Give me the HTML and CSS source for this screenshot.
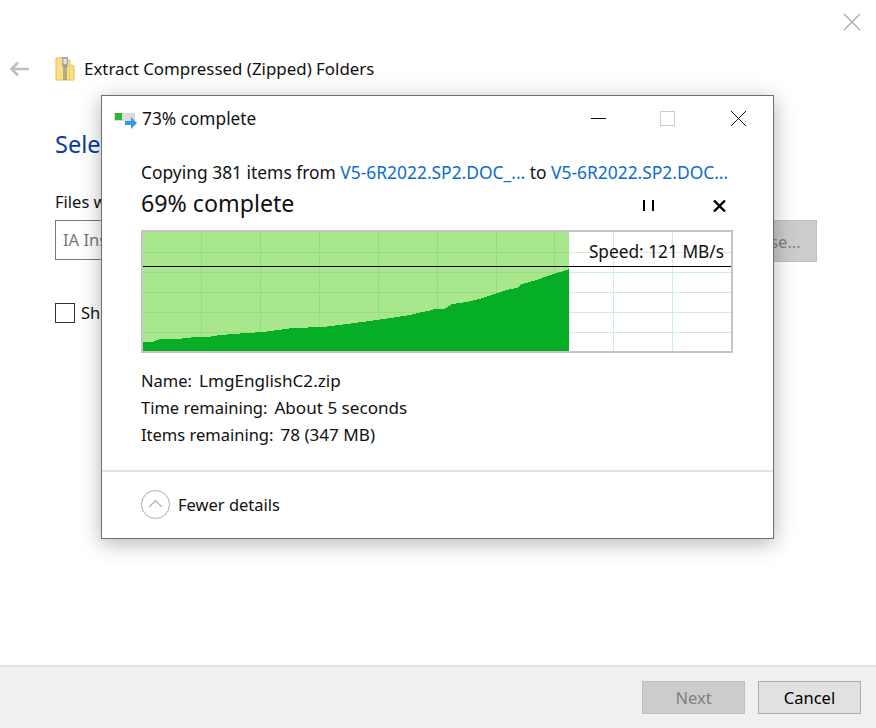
FILE: index.html
```html
<!DOCTYPE html>
<html lang="en">
<head>
<meta charset="utf-8">
<title>Extract Compressed (Zipped) Folders</title>
<link rel="stylesheet" href="styles.css">
</head>
<body>
<div class="wizard">
  <div class="wizard-top">
    <svg class="icon-close-wizard" width="18" height="18" viewBox="0 0 18 18"><path d="M1 1L17 17M17 1L1 17" stroke="#a8a8a8" stroke-width="1.1" fill="none"/></svg>
  </div>
  <div class="wizard-head">
    <svg class="icon-back" width="22" height="16" viewBox="0 0 22 16"><path d="M9 1.5L2.5 8L9 14.500M3 8H20" stroke="#c0c0c0" stroke-width="2.600" fill="none"/></svg>
    <svg class="icon-zip" width="20" height="24" viewBox="0 0 20 24">
      <path d="M1 1H6V0.500H11V3H15V8L19 9V23H1Z" fill="#fbe08a" stroke="#e8c04e"/>
      <rect x="14" y="4" width="1" height="19" fill="#f0cd62"/>
      <rect x="7" y="0" width="6" height="10" rx="1" fill="#a9a9a9"/>
      <rect x="8.500" y="2" width="3" height="5" fill="#e4e4e4"/>
      <path d="M8 10H12M8 12H12M8 14H12M8 16H12M8 18H12M8 20H12M8 22H12" stroke="#777" stroke-width="1"/>
    </svg>
    <span class="wizard-title">Extract Compressed (Zipped) Folders</span>
  </div>
  <main class="wizard-body">
    <h1 class="wizard-heading">Select a Destination and Extract Files</h1>
    <label class="field-label">Files will be extracted to this folder:</label>
    <div class="field-row">
      <div class="field-input">IA Installers\V5-6R2022.SP2.DOC</div>
      <div class="btn btn-disabled btn-browse">Browse...</div>
    </div>
    <div class="check-row"><span class="checkbox"></span><span>Show extracted files when complete</span></div>
  </main>
  <footer class="wizard-foot">
    <div class="btn btn-disabled">Next</div>
    <div class="btn btn-normal">Cancel</div>
  </footer>
</div>

<section class="dialog">
  <div class="dlg-title">
    <svg class="icon-copy" width="24" height="18" viewBox="0 0 24 18">
      <rect x="0" y="1" width="21" height="8" fill="#dcdcdc"/>
      <rect x="1" y="1" width="7" height="7" fill="#2fb334"/>
      <path d="M11 9H17V5L23 11L17 17V13H11Z" fill="#3b97e3"/>
    </svg>
    <span class="dlg-title-text">73% complete</span>
    <div class="win-controls">
      <svg width="15" height="16" viewBox="0 0 15 16"><path d="M0 8.500H15" stroke="#111" stroke-width="1"/></svg>
      <svg width="15" height="16" viewBox="0 0 15 16"><rect x="0.500" y="1.500" width="14" height="14" fill="none" stroke="#ccc"/></svg>
      <svg class="win-x" width="15" height="16" viewBox="0 0 15 16"><path d="M0 1L15 16M15 1L0 16" stroke="#111" stroke-width="1" fill="none"/></svg>
    </div>
  </div>
  <div class="dlg-content">
    <p class="copy-line">Copying 381 items from <a class="link">V5-6R2022.SP2.DOC_...</a> to <a class="link">V5-6R2022.SP2.DOC...</a></p>
    <div class="progress-row">
      <span class="progress-text">69% complete</span>
      <div class="progress-actions">
        <svg width="12" height="12" viewBox="0 0 12 12"><path d="M1 0V11M10 0V11" stroke="#000" stroke-width="2" fill="none"/></svg>
        <svg width="13" height="12" viewBox="0 0 13 12"><path d="M1 0.500L12 11.500M12 0.500L1 11.500" stroke="#000" stroke-width="2.400" fill="none"/></svg>
      </div>
    </div>
    <div class="chart">
      <svg class="chart-svg" width="588" height="119" viewBox="143 232 588 119" shape-rendering="crispEdges">
        <rect x="143" y="232" width="426" height="119" fill="#a9e78f"/>
        <path d="M143 252.500H569M143 272.500H569M143 292.500H569M143 312.500H569M143 332.500H569M201.500 232V351M260.500 232V351M319.500 232V351M378.500 232V351M437.500 232V351M496.500 232V351M554.500 232V351" stroke="#92e07c" stroke-width="1" fill="none"/>
        <path d="M569 252.500H731M569 272.500H731M569 292.500H731M569 312.500H731M569 332.500H731M613.500 232V351M672.500 232V351" stroke="#cdf0d5" stroke-width="1" fill="none"/>
        <path fill="#06ae25" d="M143 351V342H153L160 339H177L195 337H208L220 335L247 333L263 332L293 328L323 327L347 324L377 320L397 317L410 315L420 312.500L430 310.500L435 308.500H445L452 304L467 302L483 298L500 292L507 290L517 288L522 284L537 280L550 275L567 270L569 269V351Z"/>
        <path d="M143 266.500H731" stroke="#000" stroke-width="1"/>
      </svg>
      <span class="chart-speed">Speed: 121 MB/s</span>
    </div>
    <dl class="stats">
      <div class="stat"><dt>Name:</dt><dd>LmgEnglishC2.zip</dd></div>
      <div class="stat"><dt>Time remaining:</dt><dd>About 5 seconds</dd></div>
      <div class="stat"><dt>Items remaining:</dt><dd>78 (347 MB)</dd></div>
    </dl>
  </div>
  <div class="dlg-foot">
    <svg width="30" height="30" viewBox="0 0 30 30"><circle cx="15" cy="15" r="14.500" fill="none" stroke="#a9a9a9" stroke-width="1"/><path d="M8.500 17.500L15 11L21.500 17.500" fill="none" stroke="#a9a9a9" stroke-width="1.200"/></svg>
    <span>Fewer details</span>
  </div>
</section>
</body>
</html>
```
FILE: styles.css
```css
* { box-sizing: border-box; }
html, body { margin: 0; padding: 0; }
body {
  width: 876px;
  height: 728px;
  overflow: hidden;
  background: #fff;
  color: #111;
  font-family: "Noto Sans", "Open Sans", sans-serif;
  font-size: 16.5px;
  position: relative;
}
.wizard {
  height: 728px;
  display: flex;
  flex-direction: column;
}
.wizard-top {
  height: 50px;
  padding: 13px 15px 0 0;
  display: flex;
  justify-content: flex-end;
}
.wizard-head {
  height: 38px;
  display: flex;
  align-items: center;
  padding-left: 9px;
}
.icon-back { margin-right: 24px; }
.icon-zip { margin-right: 9px; }
.wizard-title { font-size: 16.9px; line-height: 22px; }
.wizard-body {
  flex: 1;
  padding: 0 59px 0 55px;
}
.wizard-heading {
  margin: 38px 0 0;
  font-size: 23.5px;
  font-weight: 400;
  line-height: 36px;
  color: #0a3aa6;
}
.field-label { display: block; margin-top: 29px; line-height: 22px; }
.field-row { display: flex; margin-top: 7px; gap: 12px; }
.field-input {
  flex: 1;
  height: 40px;
  line-height: 38px;
  padding-left: 7px;
  border: 1px solid #7a7a7a;
  color: #767676;
}
.btn {
  width: 103px;
  height: 33px;
  display: flex;
  align-items: center;
  justify-content: center;
  border: 1px solid #adadad;
}
.btn-browse { height: 42px; }
.btn-disabled { background: #cccccc; border-color: #bfbfbf; color: #7f7f7f; }
.btn-normal { background: #e1e1e1; border-color: #adadad; color: #000; }
.check-row { display: flex; align-items: center; gap: 6px; margin-top: 39px; }
.checkbox { width: 20px; height: 20px; border: 1px solid #333; background: #fff; }
.wizard-foot {
  height: 63px;
  flex: none;
  display: flex;
  justify-content: flex-end;
  gap: 13px;
  padding: 14px 15px 0 0;
  background: #f0f0f0;
  border-top: 2px solid #e2e2e2;
}

.dialog {
  position: absolute;
  left: 101px;
  top: 95px;
  width: 673px;
  height: 444px;
  background: #fff;
  border: 1px solid #707070;
  box-shadow: 0 4px 20px rgba(0, 0, 0, 0.3);
  display: flex;
  flex-direction: column;
}
.dlg-title {
  height: 46px;
  display: flex;
  align-items: center;
  padding-left: 12px;
}
.icon-copy { margin-right: 4px; margin-top: 3px; }
.dlg-title-text { flex: 1; font-size: 17.3px; line-height: 22px; margin-bottom: 1px; }
.win-controls { display: flex; gap: 54px; padding: 0 27px 2px 0; }
.win-x { margin-left: 2px; }
.dlg-content { padding: 19px 0 0 39px; flex: 1; }
.copy-line { margin: 0; line-height: 22px; white-space: nowrap; font-size: 17.4px; }
.link { color: #0b6ccf; }
.progress-row {
  display: flex;
  align-items: center;
  height: 32px;
  margin-top: 5px;
  width: 592px;
}
.progress-text { flex: 1; font-size: 23.2px; line-height: 28px; margin-bottom: 2px; }
.progress-actions { display: flex; gap: 58px; padding-right: 7px; padding-top: 4px; }
.chart {
  position: relative;
  width: 592px;
  height: 123px;
  margin-top: 10px;
  border: 2px solid #c4c4c4;
}
.chart-svg { display: block; }
.chart-speed {
  position: absolute;
  right: 7px;
  top: 9px;
  line-height: 22px;
  font-size: 17.3px;
}
.stats { margin: 14px 0 0; }
.stat { display: flex; gap: 7px; height: 27px; line-height: 27px; }
.stat dt, .stat dd { margin: 0; }
.stat dd { font-size: 17.1px; }
.dlg-foot {
  height: 68px;
  flex: none;
  display: flex;
  align-items: center;
  gap: 8px;
  padding: 0 0 2px 39px;
  border-top: 2px solid #e3e3e3;
}
.dlg-foot svg { width: 29px; height: 29px; }
```
